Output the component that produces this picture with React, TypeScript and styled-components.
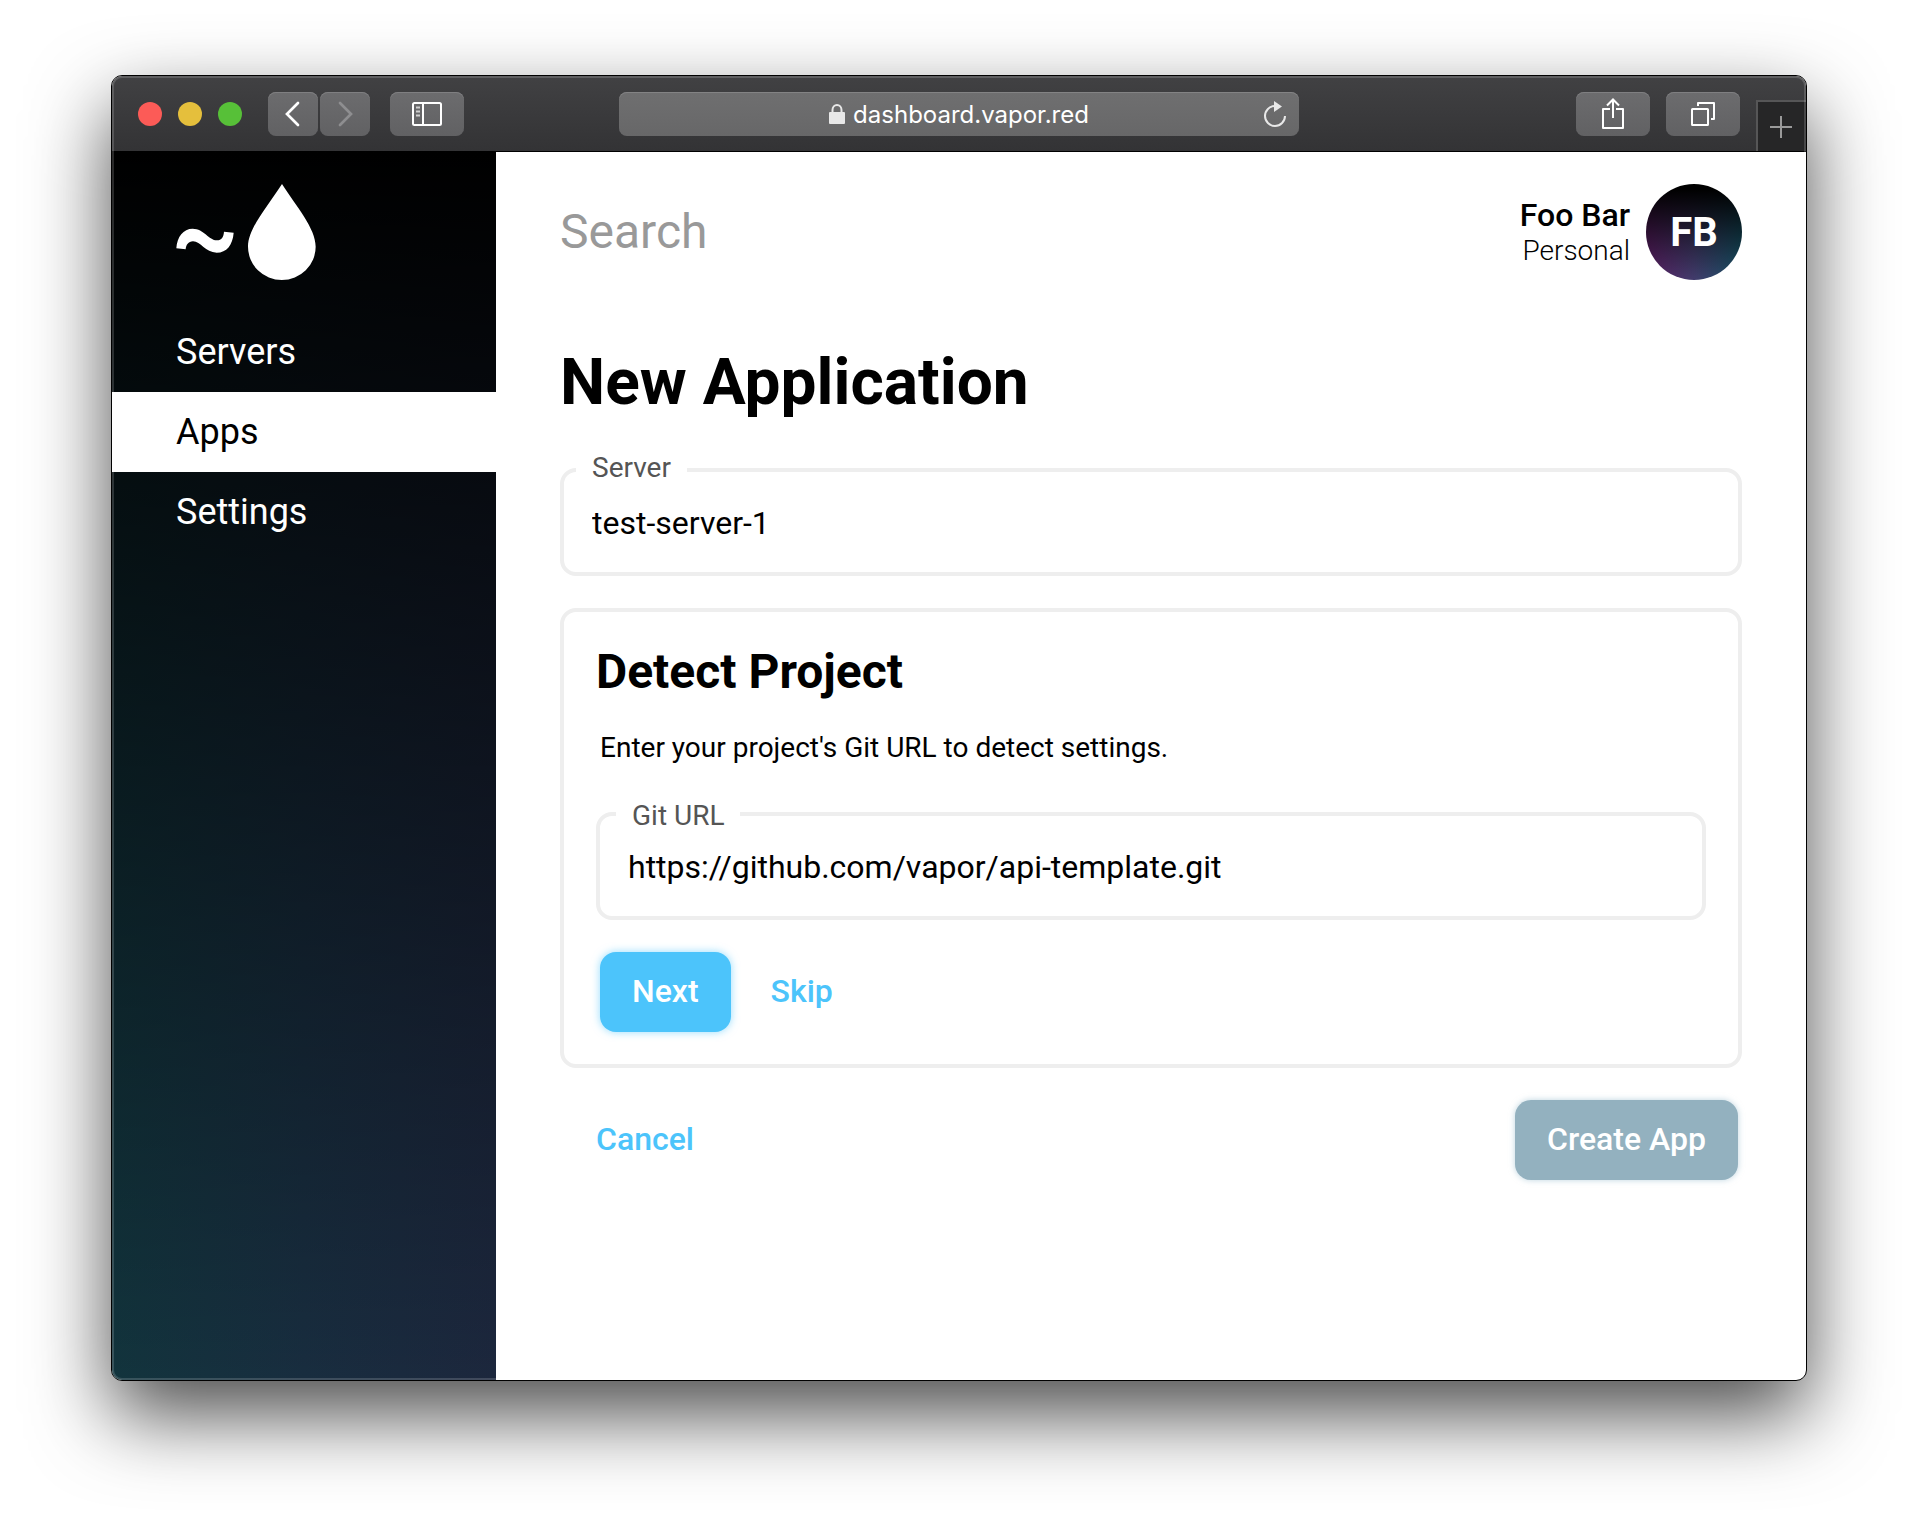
import React, { useState } from "react";
import styled, { createGlobalStyle } from "styled-components";

const GlobalStyle = createGlobalStyle`
  * { box-sizing: border-box; }
  html, body { margin: 0; background: #fff; }
  body { font-family: Roboto, "Liberation Sans", sans-serif; color: #000; }
  button, input { font-family: inherit; margin: 0; }
`;

const Desktop = styled.div`
  display: flex;
  min-height: 100vh;
  padding: 75px 111px 147px;
`;

const Window = styled.div`
  position: relative;
  flex: 1;
  min-width: 0;
  display: flex;
  flex-direction: column;
  overflow: hidden;
  border: 1px solid #000;
  border-radius: 11px;
  background: #fff;
  box-shadow: 0 34px 80px rgba(0, 0, 0, 0.7);

  &::after {
    content: "";
    position: absolute;
    inset: 0;
    border-radius: 10px;
    box-shadow: inset 0 0 0 2px rgba(255, 255, 255, 0.16);
    pointer-events: none;
  }
`;

const Toolbar = styled.header`
  display: grid;
  grid-template-columns: 1fr minmax(0, 680px) 1fr;
  height: 76px;
  border-bottom: 1px solid #000;
  background: linear-gradient(#414143, #333335);
`;

const ToolbarGroup = styled.div<{ $end?: boolean }>`
  display: flex;
  align-items: flex-start;
  justify-content: ${(p) => (p.$end ? "flex-end" : "flex-start")};
  gap: 16px;
  padding: ${(p) => (p.$end ? "16px 0 0" : "16px 0 0 26px")};
`;

const Lights = styled.div`
  display: flex;
  gap: 16px;
  padding: 10px 10px 0 0;
`;

const Light = styled.button<{ $color: string }>`
  width: 24px;
  height: 24px;
  padding: 0;
  border: 0;
  border-radius: 50%;
  background: ${(p) => p.$color};
`;

const NavPair = styled.div`
  display: flex;
  gap: 2px;
  margin-right: 4px;
`;

const ToolButton = styled.button<{ $narrow?: boolean }>`
  display: flex;
  align-items: center;
  justify-content: center;
  width: ${(p) => (p.$narrow ? "50px" : "74px")};
  height: 44px;
  padding: 0;
  border: 0;
  border-radius: 8px;
  color: #fff;
  background: linear-gradient(#6c6c6e, #616163);
  box-shadow: inset 0 1px 0 #7f7f81;
`;

const NewTab = styled.button`
  display: flex;
  align-items: center;
  justify-content: center;
  align-self: flex-end;
  width: 50px;
  height: 51px;
  padding: 0 2px 0 0;
  border: solid #565657;
  border-width: 2px 0 0 2px;
  color: #9a9a9a;
  background: #262627;
`;

const AddressBar = styled.div`
  display: grid;
  grid-template-columns: 1fr auto 1fr;
  align-items: center;
  height: 44px;
  margin-top: 16px;
  padding: 0 12px;
  border-radius: 8px;
  color: #e8e8e8;
  background: linear-gradient(#6f6f70, #676768);
  box-shadow: inset 0 1px 0 #838384;
`;

const Address = styled.label`
  grid-column: 2;
  display: flex;
  align-items: center;
  gap: 8px;
`;

const AddressInput = styled.input`
  field-sizing: content;
  padding: 2px 0 0;
  border: 0;
  outline: 0;
  font: 400 24px/32px Inter, "Liberation Sans", sans-serif;
  color: #fff;
  background: none;
`;

const Reload = styled.button`
  justify-self: end;
  display: flex;
  padding: 0;
  border: 0;
  color: inherit;
  background: none;
`;

const Body = styled.div`
  flex: 1;
  display: flex;
`;

const Sidebar = styled.aside`
  width: 384px;
  flex: none;
  padding-top: 32px;
  background: linear-gradient(#000, rgba(0, 0, 0, 0)),
    linear-gradient(90deg, #12343d, #182d3f 50%, #1c273d);
`;

const Logo = styled.a`
  display: block;
  height: 96px;
  margin: 0 64px 32px;
`;

const NavLink = styled.a<{ $active?: boolean }>`
  display: block;
  padding: 0 64px;
  font-size: 36px;
  line-height: 80px;
  text-decoration: none;
  color: ${(p) => (p.$active ? "#000" : "#fff")};
  background: ${(p) => (p.$active ? "#fff" : "transparent")};
`;

const Main = styled.main`
  flex: 1;
  min-width: 0;
  padding: 32px 64px;
`;

const TopRow = styled.div`
  display: flex;
  align-items: center;
  gap: 16px;
  margin-bottom: 64px;
`;

const Search = styled.input`
  flex: 1;
  min-width: 0;
  padding: 0;
  border: 0;
  outline: 0;
  font-size: 48px;
  line-height: 56px;
  color: #000;
  background: none;

  &::placeholder { color: #999; opacity: 1; }
`;

const User = styled.div`
  text-align: right;
`;

const UserName = styled.div`
  font-size: 32px;
  font-weight: 500;
  line-height: 38px;
`;

const UserTeam = styled.div`
  font-size: 28px;
  font-weight: 300;
  line-height: 34px;
`;

const Avatar = styled.button`
  width: 96px;
  height: 96px;
  padding: 0;
  border: 0;
  border-radius: 50%;
  font-size: 40px;
  font-weight: 700;
  color: #fff;
  background: linear-gradient(#000 5%, rgba(0, 0, 0, 0)),
    linear-gradient(90deg, #5c1f66, #423c6c 50%, #175468);
`;

const Title = styled.h1`
  margin: 0 0 46px;
  font-size: 64px;
  font-weight: 700;
  line-height: 78px;
`;

const Form = styled.form`
  display: flex;
  flex-direction: column;
  gap: 32px;
`;

const FieldBox = styled.div`
  position: relative;
  border: 4px solid #eee;
  border-radius: 16px;
`;

const FieldLabel = styled.label<{ $inset?: boolean }>`
  position: absolute;
  top: ${(p) => (p.$inset ? "-16px" : "-20px")};
  left: ${(p) => (p.$inset ? "16px" : "12px")};
  padding: 0 16px;
  font-size: 28px;
  line-height: 32px;
  color: #555;
  background: #fff;
`;

const FieldInput = styled.input`
  display: block;
  width: 100%;
  height: 100px;
  padding: 31px 28px 29px;
  border: 0;
  border-radius: 12px;
  outline: 0;
  font-size: 32px;
  line-height: 40px;
  color: #000;
  background: none;
`;

const Card = styled.section`
  padding: 32px;
  border: 4px solid #eee;
  border-radius: 16px;
`;

const CardTitle = styled.h2`
  margin: 0 0 32px;
  font-size: 48px;
  font-weight: 700;
  line-height: 56px;
`;

const Hint = styled.p`
  margin: 0 4px 48px;
  font-size: 28px;
  line-height: 32px;
`;

const Actions = styled.div<{ $spread?: boolean }>`
  display: flex;
  justify-content: ${(p) => (p.$spread ? "space-between" : "flex-start")};
  gap: 8px;
  padding: 0 4px;
  margin-top: ${(p) => (p.$spread ? "0" : "32px")};
`;

const Button = styled.button<{ $kind: "primary" | "muted" | "text" }>`
  height: 80px;
  padding: 0 32px 2px;
  border: 0;
  border-radius: 16px;
  font-size: 32px;
  font-weight: 500;
  color: ${(p) => (p.$kind === "text" ? "#4cc4fb" : "#fff")};
  background: ${(p) =>
    ({ primary: "#4cc4fb", muted: "#93b1bf", text: "none" })[p.$kind]};
  box-shadow: ${(p) =>
    ({
      primary: "0 0 8px rgba(76, 196, 251, 0.6)",
      muted: "0 0 6px rgba(147, 185, 203, 0.6)",
      text: "none",
    })[p.$kind]};
`;

function Field(props: {
  id: string;
  label: string;
  initial: string;
  inset?: boolean;
}) {
  const [value, setValue] = useState(props.initial);
  return (
    <FieldBox>
      <FieldInput
        id={props.id}
        value={value}
        spellCheck={false}
        onChange={(e) => setValue(e.target.value)}
      />
      <FieldLabel htmlFor={props.id} $inset={props.inset}>
        {props.label}
      </FieldLabel>
    </FieldBox>
  );
}

const LogoMark = () => (
  <svg width="140" height="96" viewBox="228 372 420 288" fill="#fff">
    <path d="M229 565C231 530 250 506 278 506C312 506 326 541 351 541C365 541 371 530 372 515L401 518C398 555 380 578 350 578C316 578 302 544 279 544C265 544 258 555 257 568Z" />
    <path d="M546 372C590 441 647 505 647 560A101.500 100 0 0 1 444 560C444 505 502 441 546 372Z" />
  </svg>
);

const Chevron = ({ left }: { left?: boolean }) => (
  <svg width="16" height="26" viewBox="0 0 16 26" fill="none" stroke={left ? "#fff" : "#8e8e90"} strokeWidth="2.700">
    <path d={left ? "M13 2L2 13L13 24" : "M3 2L14 13L3 24"} strokeLinecap="round" />
  </svg>
);

const PanelIcon = () => (
  <svg width="30" height="24" viewBox="0 0 30 24" fill="none" stroke="currentColor" strokeWidth="2">
    <rect x="1" y="1" width="28" height="22" rx="1.500" />
    <path d="M11 1V23" />
    <path d="M4 5.500H8M4 9.500H8M4 13.500H8" strokeWidth="1.800" stroke="#cfcfcf" />
  </svg>
);

const ShareIcon = () => (
  <svg width="24" height="32" viewBox="0 0 24 32" fill="none" stroke="currentColor" strokeWidth="2">
    <path d="M9 11H2V30H22V11H15" strokeLinejoin="round" />
    <path d="M12 20V2M6 7.500L12 1.500L18 7.500" />
  </svg>
);

const TabsIcon = () => (
  <svg width="24" height="24" viewBox="0 0 24 24" fill="none" stroke="currentColor" strokeWidth="2" strokeLinejoin="round">
    <rect x="1" y="7" width="16" height="16" rx="0.500" />
    <path d="M7 4V1H23V17H20" />
  </svg>
);

const PlusIcon = () => (
  <svg width="22" height="22" viewBox="0 0 22 22" stroke="currentColor" strokeWidth="2">
    <path d="M11 0V22M0 11H22" />
  </svg>
);

const LockIcon = () => (
  <svg width="16" height="20" viewBox="0 0 16 20" fill="none">
    <rect y="8" width="16" height="12" rx="1" fill="currentColor" />
    <path d="M3.500 9V6A4.500 5 0 0 1 12.500 6V9" stroke="currentColor" strokeWidth="2" />
  </svg>
);

const ReloadIcon = () => (
  <svg width="24" height="28" viewBox="0 0 24 28" fill="none">
    <path d="M12 6A10 10 0 1 0 22 16" stroke="currentColor" strokeWidth="2" />
    <path d="M11 1L19 6.500L11 12Z" fill="currentColor" />
  </svg>
);

const navItems = ["Servers", "Apps", "Settings"];

export default function App() {
  const [url, setUrl] = useState("dashboard.vapor.red");
  return (
    <>
      <GlobalStyle />
      <Desktop>
        <Window>
          <Toolbar>
            <ToolbarGroup>
              <Lights>
                <Light $color="#fc5b57" aria-label="Close" />
                <Light $color="#e5bf3c" aria-label="Minimize" />
                <Light $color="#57c038" aria-label="Zoom" />
              </Lights>
              <NavPair>
                <ToolButton $narrow aria-label="Back">
                  <Chevron left />
                </ToolButton>
                <ToolButton $narrow aria-label="Forward">
                  <Chevron />
                </ToolButton>
              </NavPair>
              <ToolButton aria-label="Toggle sidebar">
                <PanelIcon />
              </ToolButton>
            </ToolbarGroup>
            <AddressBar>
              <Address>
                <LockIcon />
                <AddressInput
                  aria-label="Address"
                  value={url}
                  spellCheck={false}
                  onChange={(e) => setUrl(e.target.value)}
                />
              </Address>
              <Reload aria-label="Reload">
                <ReloadIcon />
              </Reload>
            </AddressBar>
            <ToolbarGroup $end>
              <ToolButton aria-label="Share">
                <ShareIcon />
              </ToolButton>
              <ToolButton aria-label="Show tabs">
                <TabsIcon />
              </ToolButton>
              <NewTab aria-label="New tab">
                <PlusIcon />
              </NewTab>
            </ToolbarGroup>
          </Toolbar>
          <Body>
            <Sidebar>
              <Logo href="#" aria-label="Home">
                <LogoMark />
              </Logo>
              <nav>
                {navItems.map((item) => (
                  <NavLink key={item} href="#" $active={item === "Apps"}>
                    {item}
                  </NavLink>
                ))}
              </nav>
            </Sidebar>
            <Main>
              <TopRow>
                <Search type="text" placeholder="Search" aria-label="Search" />
                <User>
                  <UserName>Foo Bar</UserName>
                  <UserTeam>Personal</UserTeam>
                </User>
                <Avatar>FB</Avatar>
              </TopRow>
              <Title>New Application</Title>
              <Form onSubmit={(e) => e.preventDefault()}>
                <Field id="server" label="Server" initial="test-server-1" />
                <Card>
                  <CardTitle>Detect Project</CardTitle>
                  <Hint>Enter your project's Git URL to detect settings.</Hint>
                  <Field
                    id="git-url"
                    label="Git URL"
                    initial="https://github.com/vapor/api-template.git"
                    inset
                  />
                  <Actions>
                    <Button type="button" $kind="primary">Next</Button>
                    <Button type="button" $kind="text">Skip</Button>
                  </Actions>
                </Card>
                <Actions $spread>
                  <Button type="button" $kind="text">Cancel</Button>
                  <Button type="submit" $kind="muted">Create App</Button>
                </Actions>
              </Form>
            </Main>
          </Body>
        </Window>
      </Desktop>
    </>
  );
}
